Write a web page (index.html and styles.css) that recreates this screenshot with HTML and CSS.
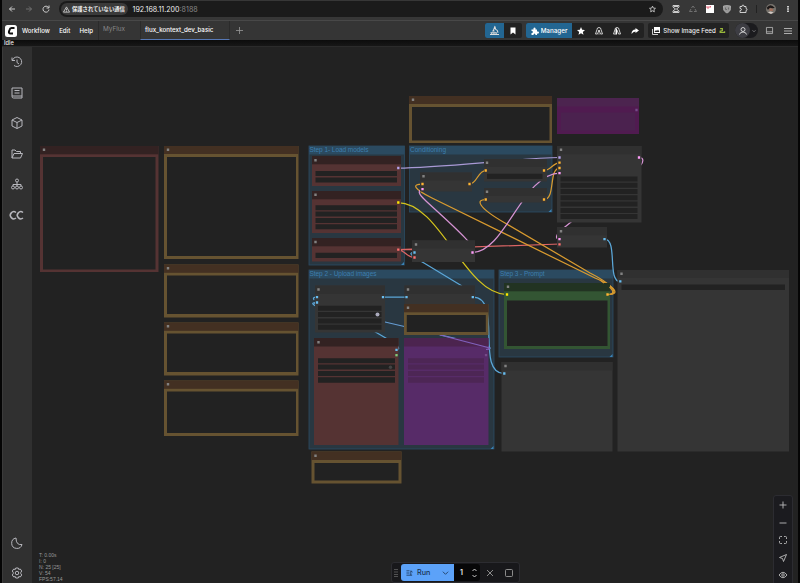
FILE: index.html
```
<!DOCTYPE html>
<html lang="ja">

<head>
    <meta charset="UTF-8">
    <meta name="viewport" content="width=device-width, initial-scale=1.0">
    <title>flux_kontext_dev_basic - ComfyUI</title>
    <link rel="stylesheet" href="styles.css">
</head>

<body>
    <!-- Browser toolbar -->
    <header class="browser-bar">
        <div class="nav-icons">
            <svg class="icon" viewBox="0 0 16 16"><path d="M14 8H3M8 3L3 8l5 5"/></svg>
            <svg class="icon dim" viewBox="0 0 16 16"><path d="M2 8h11M8 3l5 5-5 5"/></svg>
            <svg class="icon" viewBox="0 0 16 16"><path d="M13 5A6 6 0 1 0 14 9M14 1v5H9"/></svg>
        </div>
        <div class="url-bar">
            <div class="security-chip">
                <svg class="icon" viewBox="0 0 16 16"><path d="M8 2L15 14H1zM8 6v4M8 11v2"/></svg>
                <span>保護されていない通信</span>
            </div>
            <span class="url">192.168.11.200<span class="port">:8188</span></span>
            <svg class="icon bookmark" viewBox="0 0 16 16"><path d="M8 1.500l2 4.400 4.800.5-3.600 3.200 1 4.800L8 12l-4.200 2.400 1-4.800L1.200 6.400l4.800-.5z"/></svg>
        </div>
        <div class="extensions">
            <svg class="icon" viewBox="0 0 16 16"><path d="M2 1h12v3L9 8l5 4v3H2v-3l5-4-5-4zM4 3h8M4 13h8"/></svg>
            <svg class="icon dim" viewBox="0 0 16 16"><path d="M5 6l3-4 3 4M12 8l3 5h-5M7 13H1l3-5"/></svg>
            <svg class="icon" viewBox="0 0 16 16"><path class="pink-page" d="M0 0h16v16H0z"/><path class="pink-mark" d="M2 2v4h4V2M9 2v3"/></svg>
            <svg class="icon" viewBox="0 0 16 16"><path class="shield" d="M1 2l7-1 7 1v5c0 4-3 7-7 9-4-2-7-5-7-9z"/><path class="shield-mark" d="M5 5v4h3M11 5v4"/></svg>
            <svg class="icon" viewBox="0 0 16 16"><path d="M2 3h4q0-3 2-3t2 3h4v4q2 0 2 2t-2 2v4H2v-4q3 0 3-2T2 7z"/></svg>
            <i class="divider"></i>
            <svg class="icon avatar" viewBox="0 0 16 16"><circle cx="8" cy="8" r="8"/><path class="hair" d="M1 6q6-8 13 0l-4 1-3-1-4 3z"/><path class="face" d="M5 7h6v4H6z"/><path class="shirt" d="M3 13l4-1 5 1-4 3z"/></svg>
            <svg class="icon" viewBox="0 0 16 16"><path class="fill" d="M6 0h4v4H6zM6 6h4v4H6zM6 12h4v4H6z"/></svg>
        </div>
    </header>

    <!-- ComfyUI top menu -->
    <nav class="menu-bar">
        <svg class="logo" viewBox="0 0 24 24"><rect width="24" height="24" rx="5"/><path d="M19 6h-6q-3 0-4 4l-1 3q-1 4 3 4h5"/></svg>
        <div class="menu">
            <span>Workflow</span>
            <span>Edit</span>
            <span>Help</span>
        </div>
        <div class="tab">MyFlux</div>
        <div class="tab active">flux_kontext_dev_basic</div>
        <svg class="icon add-tab" viewBox="0 0 16 16"><path d="M8 0v16M0 8h16"/></svg>
        <div class="actions">
            <div class="btn-group">
                <span class="btn blue square"><svg class="icon" viewBox="0 0 16 16"><path d="M0 15h16M1 12h11M4 9h4M9 0L6 8M9 2l1 4q4 1 4 6M3 12v3M7 12v3M11 12v3"/></svg></span>
                <span class="btn"><svg class="icon" viewBox="0 0 16 16"><path class="fill" d="M3 1h10v14l-5-4-5 4z"/></svg></span>
            </div>
            <div class="btn-group manager">
                <span class="btn blue wide"><svg class="icon" viewBox="0 0 16 16"><path class="fill" d="M1 5h4q-1-4 2-4t2 4h3v4q4-1 4 2t-4 2v3H9q0-3-2-3t-2 3H1v-4q3 0 3-2T1 8z"/></svg>Manager</span>
                <span class="btn"><svg class="icon" viewBox="0 0 16 16"><path class="fill" d="M8 0l2.300 5.400 5.700.5-4.300 3.900 1.300 5.700L8 12.400l-5 3.100 1.300-5.700L0 5.900l5.700-.5z"/></svg></span>
                <span class="btn"><svg class="icon" viewBox="0 0 16 16"><path d="M4 5q0-4 4-4t4 4l3 9h-4L8 6l-3 8H1zM8 6v4M7 14h2"/></svg></span>
                <span class="btn"><svg class="icon" viewBox="0 0 16 16"><path d="M4 5q0-4 4-4t4 4l3 9h-4L8 6M4 5L1 14h4"/><path class="fill" d="M5 3h3v12H5z"/></svg></span>
                <span class="btn"><svg class="icon" viewBox="0 0 16 16"><path class="fill" d="M9 2l7 5-7 5V9q-5 0-8 5 0-9 8-9z"/></svg></span>
            </div>
            <div class="btn-group feed">
                <svg class="icon" viewBox="0 0 16 16"><path class="fill" d="M4 0h12v12H4z"/><path d="M1 4v11h11"/><path class="cut" d="M5 10l3-4 2 2 2-3 3 5z"/></svg>
                <span>Show Image Feed</span>
                <svg class="icon snake" viewBox="0 0 16 16"><path d="M3 3h6v5l-6 2v3h12v-3"/></svg>
            </div>
            <div class="user">
                <span class="user-face"><svg class="icon" viewBox="0 0 16 16"><circle cx="8" cy="5" r="4"/><path d="M1 15q1-5 7-5t7 5"/></svg></span>
                <svg class="icon caret" viewBox="0 0 16 16"><path d="M2 5l6 6 6-6"/></svg>
            </div>
            <svg class="icon panel" viewBox="0 0 16 16"><path d="M1 1h14v14H1zM1 11h14"/></svg>
            <svg class="icon burger" viewBox="0 0 16 16"><path d="M0 3h16M0 8h16M0 13h16"/></svg>
        </div>
    </nav>

    <div class="status">Idle</div>

    <main class="workspace">
        <aside class="sidebar">
            <svg class="icon" viewBox="0 0 24 24"><path d="M2 3v6h6M3 8a9.500 9.500 0 1 1 3 11M12 7v6l4 3"/></svg>
            <svg class="icon" viewBox="0 0 24 24"><path d="M2 2h20v20H5q-3 0-3-3zM2 18h20M7 7h10M7 12h10"/></svg>
            <svg class="icon" viewBox="0 0 24 24"><path d="M12 1l10 5v12l-10 5-10-5V6zM2 6l10 5 10-5M12 11v12"/></svg>
            <svg class="icon" viewBox="0 0 24 24"><path d="M2 20V4h6l3 3h8v4M2 20l4-9h17l-4 9z"/></svg>
            <svg class="icon" viewBox="0 0 24 24"><circle cx="12" cy="5" r="3"/><circle cx="4" cy="19" r="3"/><circle cx="12" cy="19" r="3"/><circle cx="20" cy="19" r="3"/><path d="M12 8v8M4 16v-3h16v3"/></svg>
            <svg class="icon cc" viewBox="0 0 28 24"><path d="M12 7A7 7 0 1 0 12 18M26 7A7 7 0 1 0 26 18"/></svg>
            <svg class="icon moon" viewBox="0 0 24 24"><path d="M10 2A10.500 10.500 0 1 0 22 15Q10 17 10 2z"/></svg>
            <svg class="icon" viewBox="0 0 24 24"><path d="M9.500 2h5l1 3 3-1 3 4-2 3v2l2 3-3 4-3-1-1 3h-5l-1-3-3 1-3-4 2-3v-2L2.500 8l3-4 3 1z"/><circle cx="12" cy="12" r="3.500"/></svg>
        </aside>

        <div class="graph">
            <svg class="graph-canvas" viewBox="32 47 766 536" width="766" height="536">
                <!-- Groups -->
                <g class="group">
                    <rect x="309" y="146" width="95.500" height="119"/>
                    <rect class="group-head" x="309" y="146" width="95.500" height="8.500"/>
                    <rect x="409.500" y="146" width="142.500" height="66"/>
                    <rect class="group-head" x="409.500" y="146" width="142.500" height="8.500"/>
                    <rect x="309" y="270" width="185" height="179"/>
                    <rect class="group-head" x="309" y="270" width="185" height="8.500"/>
                    <rect x="499" y="270" width="114" height="87"/>
                    <rect class="group-head" x="499" y="270" width="114" height="8.500"/>
                    <path class="grip" d="M404 262v3h-3zM551.500 209v3h-3zM493.500 446v3h-3zM612.500 354v3h-3z"/>
                    <text x="309.500" y="152.300" textLength="59">Step 1- Load models</text>
                    <text x="410" y="152.300" textLength="36">Conditioning</text>
                    <text x="309.500" y="276.300" textLength="67">Step 2 - Upload images</text>
                    <text x="500" y="276.300" textLength="44.500">Step 3 - Prompt</text>
                </g>

                <!-- Links -->
                <g class="links">
                    <path class="model" d="M398 168C440 168 520 158 560 157.500"/>
                    <path class="clip" d="M398 202.500C440 202.500 465 294.500 507 294.500"/>
                    <path class="vae" d="M398 249.500L560 244M398 249.500C404 249.500 407 257.500 414 257.500M398 249.500H414"/>
                    <path class="cond" d="M469.500 184C477 184 478 170.500 485.500 170.500M544 170.500C551 170.500 553 162.500 560 162.500M544 199.500C556 199.500 548 168 560 168"/>
                    <path class="cond" d="M607.500 294.500C624 294.500 610 284 595 278L432 198C414 189 411 184 422.500 184"/>
                    <path class="cond" d="M607.500 294.500C622 294.500 610 283 590 273L505 223C477 207 476 199.500 485.500 199.500"/>
                    <path class="latent" d="M472.500 252.500C505 252.500 523 173 560 173M472.500 252.500C485 252.500 435 210 425 200Q415 191 422.500 189"/>
                    <path class="latent" d="M639 157.500C644 157.500 644 162 640 166L560 231Q553 239 560 239"/>
                    <path class="image" d="M604.500 239C618 239 607 281.500 620 281.500M383 297H406.500M473 297C503 297 475 373.500 504 373.500"/>
                    <path class="image" d="M414 252.500C406 252.500 415 258 424 263L462 286"/>
                    <path class="image" d="M317 302.500Q309 302.500 316 306L372 330 396 344Q401 349.500 396.500 349.500M317 297Q312 297 314 300"/>
                    <path class="image" d="M314 303C330 309 355 316 385 322L488 346Q493 349 486 349.500"/>
                </g>

                <!-- Notes -->
                <g class="note red">
                    <rect class="body" x="40" y="146" width="118.500" height="126"/><rect class="head" x="40" y="146" width="118.500" height="8.300"/><rect class="field" x="43" y="157" width="112.500" height="112.500"/>
                </g>
                <g class="note">
                    <rect class="body" x="164" y="146" width="134.500" height="113"/><rect class="head" x="164" y="146" width="134.500" height="8"/><rect class="field" x="167" y="157" width="129" height="99"/>
                    <rect class="body" x="164" y="264.500" width="134.500" height="53"/><rect class="head" x="164" y="264.500" width="134.500" height="8.300"/><rect class="field" x="167" y="275.500" width="129" height="38.500"/>
                    <rect class="body" x="164" y="322.500" width="134.500" height="53"/><rect class="head" x="164" y="322.500" width="134.500" height="8.300"/><rect class="field" x="167" y="333.500" width="129" height="38.500"/>
                    <rect class="body" x="164" y="380.500" width="134.500" height="55.500"/><rect class="head" x="164" y="380.500" width="134.500" height="8.300"/><rect class="field" x="167" y="391.500" width="129" height="41.500"/>
                    <rect class="body" x="409" y="96" width="143" height="47"/><rect class="head" x="409" y="96" width="143" height="8"/><rect class="field" x="412" y="107" width="137.500" height="33.500"/>
                    <rect class="body" x="311.500" y="451.500" width="90" height="32"/><rect class="head" x="311.500" y="451.500" width="90" height="8.500"/><rect class="field" x="314.500" y="463" width="84" height="17.500"/>
                </g>

                <!-- Loaders -->
                <g class="node red">
                    <rect class="body" x="312" y="156" width="89" height="30"/><rect class="head" x="312" y="156" width="89" height="8.300"/>
                    <rect class="body" x="312" y="191" width="89" height="42"/><rect class="head" x="312" y="191" width="89" height="8.300"/>
                    <rect class="body" x="312" y="238" width="89" height="23.500"/><rect class="head" x="312" y="238" width="89" height="8.300"/>
                    <path class="field" d="M315.500 171h81.500v5h-81.500zm0 6.500h81.500v5h-81.500zM315.500 205.300h81.500v5h-81.500zm0 6.300h81.500v5h-81.500zm0 6.300h81.500v5h-81.500zm0 6.300h81.500v5h-81.500zM315.500 252.800h81.500v5.200h-81.500z"/>
                    <rect class="body" x="314" y="338" width="84.500" height="107"/><rect class="head" x="314" y="338" width="84.500" height="8.500"/>
                    <path class="field" d="M318 358.300h77v5h-77zm0 6.300h77v5h-77zm0 6.300h77v5h-77zm0 6.300h77v5.500h-77z"/>
                    <circle class="knob off" cx="390.500" cy="367.300" r="1.700"/>
                </g>

                <!-- Default nodes -->
                <g class="node">
                    <rect class="body" x="420" y="172.500" width="52" height="19"/><rect class="head" x="420" y="172.500" width="52" height="8"/>
                    <rect class="body" x="484" y="159" width="63" height="22.500"/><rect class="head" x="484" y="159" width="63" height="8"/>
                    <rect class="field" x="487" y="173.700" width="55.500" height="5.200"/>
                    <rect class="body" x="484" y="188" width="63" height="14.500"/><rect class="head" x="484" y="188" width="63" height="8"/>
                    <rect class="body" x="557" y="146" width="84.500" height="76.500"/><rect class="head" x="557" y="146" width="84.500" height="8.300"/>
                    <path class="field" d="M560.500 176.500h77v5h-77zm0 6.300h77v5h-77zm0 6.300h77v5h-77zm0 6.200h77v5h-77zm0 6.300h77v5h-77zm0 6.300h77v5h-77zm0 6.200h77v5h-77z"/>
                    <rect class="body" x="557" y="227" width="50" height="20.500"/><rect class="head" x="557" y="227" width="50" height="8.300"/>
                    <rect class="body" x="412" y="240.500" width="63" height="21.500"/><rect class="head" x="412" y="240.500" width="63" height="8"/>
                    <rect class="body" x="315" y="285.500" width="70" height="47"/><rect class="head" x="315" y="285.500" width="70" height="8.300"/>
                    <path class="field" d="M318 305.800h63.500v5h-63.500zm0 6.300h63.500v5h-63.500zm0 6.300h63.500v5h-63.500zm0 6.300h63.500v5h-63.500z"/>
                    <circle class="knob" cx="377.500" cy="314.500" r="2"/>
                    <rect class="body" x="404.500" y="285.500" width="70.500" height="18.500"/><rect class="head" x="404.500" y="285.500" width="70.500" height="8.300"/>
                    <rect class="body" x="501.500" y="362" width="111" height="89.500"/><rect class="head" x="501.500" y="362" width="111" height="8.500"/>
                    <rect class="body" x="617.500" y="270" width="171.500" height="181.500"/><rect class="head" x="617.500" y="270" width="171.500" height="8"/>
                    <rect class="field" x="621.500" y="284.500" width="163.500" height="5.500"/>
                </g>

                <!-- Bypassed nodes -->
                <g class="node bypassed">
                    <rect class="body dark" x="557" y="98" width="82" height="36"/><rect class="head" x="557" y="98" width="82" height="8.500"/><rect class="field" x="561" y="112.500" width="74" height="18"/>
                    <rect class="body" x="404" y="338" width="84.500" height="107"/><rect class="head" x="404" y="338" width="84.500" height="8.500"/>
                    <path class="field" d="M408 358.300h76v5h-76zm0 6.300h76v5h-76zm0 6.300h76v5h-76zm0 6.300h76v5.500h-76z"/>
                </g>
                <path class="ghost-link" d="M440 335L488 347.500Q492 349 486 349.500"/>

                <g class="note">
                    <rect class="body" x="404" y="304" width="84.500" height="31"/><rect class="head" x="404" y="304" width="84.500" height="8.300"/><rect class="field" x="406.800" y="315" width="79" height="17"/>
                </g>
                <g class="node green">
                    <rect class="body" x="504" y="283" width="106" height="66"/><rect class="head" x="504" y="283" width="106" height="8.300"/><rect class="field" x="507" y="300.500" width="100.500" height="45.500"/>
                </g>
                <path class="link-over" d="M600 280l4 3M609.500 287Q617 294 607.500 294.500"/>

                <!-- Collapse boxes -->
                <path class="boxes" d="M44 149.800h.01M168 149.800h.01M168 268.300h.01M168 326.300h.01M168 384.300h.01M413 99.700h.01M315.500 455.700h.01M315.500 160.300h.01M315.500 194.700h.01M315.500 242h.01M423.500 176.300h.01M487 162.700h.01M487 191.700h.01M561 149.800h.01M561 231.300h.01M416 244.500h.01M318.500 289.500h.01M408 289.500h.01M408 307.800h.01M318.500 342.200h.01M508 286.700h.01M505.500 366h.01M621.500 273.700h.01"/>

                <!-- Slots -->
                <path class="slot model" d="M398.300 168h.01M559.500 157.500h.01"/>
                <path class="slot clip" d="M398.300 202.500h.01M507 294.500h.01"/>
                <path class="slot vae" d="M398.300 249.700h.01M414.500 257.500h.01M559.500 244.300h.01"/>
                <path class="slot cond" d="M422.500 184h.01M469.500 184h.01M485.700 170.500h.01M544 170.500h.01M485.700 199.500h.01M544 199.500h.01M559.500 162.600h.01M559.500 168h.01M607.500 294.500h.01"/>
                <path class="slot latent" d="M422.500 189.200h.01M472.500 252.500h.01M559.500 173.200h.01M639 157.500h.01M559.500 239.200h.01"/>
                <path class="slot image" d="M604.500 239.200h.01M620.300 281.300h.01M414.500 252.500h.01M317 297.200h.01M317 302.500h.01M383 297.200h.01M406.500 297.200h.01M472.800 297.200h.01M504.300 373.500h.01M396.500 349.800h.01"/>
                <path class="slot mask" d="M396.500 355.200h.01"/>
                <path class="slot faded" d="M636.500 110h.01M486 355.200h.01"/>
            </svg>

            <div class="stats">
                <div>T: 0.00s</div>
                <div>I: 0</div>
                <div>N: 25 [25]</div>
                <div>V: 54</div>
                <div>FPS:57.14</div>
            </div>

            <div class="run-bar">
                <svg class="icon handle" viewBox="0 0 8 16"><path d="M1 1h2M5 1h2M1 6h2M5 6h2M1 11h2M5 11h2M1 15h2M5 15h2"/></svg>
                <div class="run-btn">
                    <svg class="icon" viewBox="0 0 16 16"><path d="M1 3h7M1 8h7M1 13h13M11 13V3l4 3"/></svg>
                    <span>Run</span>
                    <svg class="icon" viewBox="0 0 16 16"><path d="M2 5l6 6 6-6"/></svg>
                </div>
                <div class="count">
                    <span>1</span>
                    <svg class="icon" viewBox="0 0 10 20"><path d="M1 6l4-4 4 4M1 14l4 4 4-4"/></svg>
                </div>
                <svg class="icon cancel" viewBox="0 0 16 16"><path d="M2 2l12 12M14 2L2 14"/></svg>
                <svg class="icon stop" viewBox="0 0 16 16"><rect x="1" y="1" width="14" height="14" rx="2"/></svg>
            </div>

            <div class="zoom-bar">
                <svg class="icon" viewBox="0 0 16 16"><path d="M8 1v14M1 8h14"/></svg>
                <svg class="icon" viewBox="0 0 16 16"><path d="M1 8h14"/></svg>
                <svg class="icon" viewBox="0 0 16 16"><path d="M1 6V3q0-2 2-2h3M10 1h3q2 0 2 2v3M15 10v3q0 2-2 2h-3M6 15H3q-2 0-2-2v-3"/></svg>
                <svg class="icon" viewBox="0 0 16 16"><path d="M15 1L1 7l6 2 2 6z"/></svg>
                <svg class="icon" viewBox="0 0 16 16"><path d="M0 8q8-11 16 0-8 11-16 0z"/><circle cx="8" cy="8" r="2.500"/></svg>
            </div>
        </div>
    </main>
</body>

</html>
```
FILE: styles.css
```
* {
    margin: 0;
    padding: 0;
    box-sizing: border-box;
}

body {
    width: 800px;
    height: 583px;
    overflow: hidden;
    background-color: #222;
    border-left: 2px solid #050505;
    border-right: 2px solid #050505;
    color: #eee;
    font-family: Inter, 'Noto Sans CJK JP', sans-serif;
    font-size: 7px;
    display: flex;
    flex-direction: column;
}

.icon {
    width: 8px;
    height: 8px;
    flex: none;
    fill: none;
    stroke: #ddd;
    stroke-width: 1.8;
    overflow: visible;
}

.icon .fill {
    fill: #fff;
    stroke: none;
}

.dim {
    stroke: #777;
}

/* browser bar */
.browser-bar {
    height: 21px;
    flex: none;
    display: flex;
    align-items: center;
    background-color: #373737;
    padding-bottom: 2px;
    border-bottom: 1px solid #484848;
}

.nav-icons {
    display: flex;
    gap: 9px;
    padding-left: 6px;
    width: 57px;
}

.url-bar {
    width: 604px;
    height: 16px;
    border-radius: 8px;
    background-color: #1b1b1b;
    display: flex;
    align-items: center;
    padding: 0 7px 0 2px;
}

.security-chip {
    width: 67px;
    height: 12px;
    border-radius: 6px;
    background-color: #3a3a3a;
    display: flex;
    align-items: center;
    gap: 2px;
    padding-left: 2px;
    font-size: 5.3px;
    font-weight: 700;
    white-space: nowrap;
}

.security-chip .icon {
    width: 7px;
    height: 7px;
}

.url {
    margin-left: 4.500px;
    font-size: 7.1px;
}

.port {
    color: #888;
}

.bookmark {
    width: 7px;
    margin-left: auto;
}

.extensions {
    flex: 1;
    display: flex;
    align-items: center;
    justify-content: space-between;
    padding: 0 7px 0 9px;
}

.extensions .icon:last-child {
    width: 6px;
}

.divider {
    width: 1px;
    height: 8px;
    background-color: #222;
}

.pink-page {
    fill: #fff;
    stroke: none;
}

.pink-mark {
    stroke: #e0566c;
}

.shield {
    fill: #999;
    stroke: #aaa;
}

.shield-mark {
    stroke: #666;
}

.extensions .avatar {
    width: 10px;
    height: 10px;
    fill: #77736d;
    stroke: none;
}

.hair {
    fill: #1e1918;
}

.face {
    fill: #a36f5b;
}

.shirt {
    fill: #d3cac5;
}

/* menu bar */
.menu-bar {
    height: 19px;
    flex: none;
    display: flex;
    align-items: center;
    background-color: #353535;
    padding-right: 6px;
}

.logo {
    width: 12px;
    height: 12px;
    margin-left: 3px;
    fill: #fff;
}

.logo path {
    fill: none;
    stroke: #111;
    stroke-width: 4;
}

.menu {
    display: flex;
    justify-content: space-between;
    width: 71px;
    margin: 0 5px 0 5px;
    font-size: 6.1px;
    font-weight: 500;
    color: #fff;
}

.tab {
    width: 42px;
    height: 19px;
    padding-left: 4px;
    line-height: 17px;
    color: #888;
    font-size: 6.4px;
    border-left: 1px solid #2b2b2b;
}

.tab.active {
    width: 90px;
    color: #fff;
    font-size: 6.2px;
    font-weight: 500;
    border-bottom: 1px solid #5778b5;
    border-right: 1px solid #2b2b2b;
}

.add-tab {
    width: 7px;
    height: 7px;
    margin-left: 6px;
    stroke: #999;
}

.actions {
    margin-left: auto;
    display: flex;
    align-items: center;
}

.btn-group {
    display: flex;
    height: 15px;
    border-radius: 2px;
    background-color: #222;
    overflow: hidden;
    margin-right: 4px;
}

.btn {
    width: 18px;
    display: flex;
    align-items: center;
    justify-content: center;
}

.btn.blue {
    background-color: #236692;
    color: #fff;
}

.btn.square {
    width: 19px;
}

.btn.square .icon {
    width: 9px;
    height: 9px;
}

.btn .icon {
    width: 8px;
    height: 8px;
}

.btn.wide {
    width: 46px;
    gap: 2px;
    font-size: 6.3px;
    font-weight: 500;
}

.feed {
    width: 81px;
    align-items: center;
    justify-content: center;
    gap: 3px;
    font-size: 6.2px;
    font-weight: 500;
    margin-right: 6px;
    white-space: nowrap;
}

.feed .icon {
    height: 8px;
    width: 8px;
}

.cut {
    fill: #222;
    stroke: none;
}

.feed .snake {
    width: 6px;
    height: 7px;
    stroke: #99b83b;
    stroke-width: 3;
}

.user {
    width: 23px;
    height: 15px;
    border-radius: 8px;
    background-color: #1b1b1e;
    display: flex;
    align-items: center;
    gap: 2px;
}

.user-face {
    width: 15px;
    height: 15px;
    border-radius: 50%;
    background-color: #3d3d43;
    display: flex;
    align-items: center;
    justify-content: center;
}

.user .caret {
    width: 4px;
    height: 4px;
}

.panel {
    width: 7px;
    height: 7px;
    margin: 0 11px 0 8px;
    stroke: #bbb;
}

.burger {
    stroke: #bbb;
}

.status {
    height: 7px;
    flex: none;
    padding-left: 2px;
    background: linear-gradient(#0c0c0c, #171717);
    border-bottom: 1px solid #2b2b2b;
    font-size: 5.6px;
    line-height: 6px;
    font-weight: 500;
}

/* workspace */
.workspace {
    flex: 1;
    min-height: 0;
    display: flex;
}

.sidebar {
    width: 30px;
    flex: none;
    background-color: #303030;
    border-left: 1px solid #3b3b3b;
    display: flex;
    flex-direction: column;
    align-items: center;
    gap: 18.500px;
    padding: 9px 2px 4px 0;
}

.sidebar .icon {
    width: 12px;
    height: 12px;
    stroke: #b7b7bd;
    stroke-width: 2;
}

.sidebar .cc {
    width: 14px;
    stroke-width: 3;
}

.sidebar .moon {
    margin-top: auto;
}

.graph {
    position: relative;
    width: 766px;
    height: 536px;
}

.graph-canvas {
    display: block;
}

.group rect {
    fill: #293741;
    stroke: #2b4c64;
    stroke-width: .8;
}

.group .group-head {
    fill: #2b4a60;
    stroke: none;
}

.group text {
    fill: #3d7faf;
    font-family: 'Liberation Sans', Arial, sans-serif;
    font-size: 6.5px;
}

.grip {
    fill: #3a82b6;
}

.links path,
.ghost-link,
.link-over {
    fill: none;
    stroke-width: 1.25;
}

.links .model {
    stroke: #a899d5;
}

.links .clip {
    stroke: #d5c51c;
}

.links .vae {
    stroke: #dc6565;
}

.links .cond,
.link-over {
    stroke: #d99b2f;
}

.links .latent {
    stroke: #d693d3;
}

.links .image {
    stroke: #5ba7d8;
}

.links .image:last-child {
    stroke: #659cd2;
}

.ghost-link {
    stroke: #8060bd;
}

.body {
    fill: #353535;
}

.head {
    fill: #303030;
}

.field {
    fill: #222;
}

.note .body {
    fill: #665331;
}

.note .head {
    fill: #433022;
}

.red .body {
    fill: #553333;
}

.red .head {
    fill: #332222;
}

.green .body {
    fill: #335533;
}

.green .head {
    fill: #223322;
}

.bypassed .body {
    fill: #572b68;
}

.bypassed .body.dark {
    fill: #501b50;
}

.bypassed .head {
    fill: #4c244f;
}

.bypassed .field {
    fill: #49264f;
    opacity: .75;
}

.knob {
    fill: #aaaabc;
}

.knob.off {
    fill: #444;
}

.boxes {
    stroke: #828282;
    stroke-width: 2.4;
    stroke-linecap: square;
}

.slot {
    stroke-width: 2.3;
    stroke-linecap: square;
}

.slot.model { stroke: #b8a4ee; }
.slot.clip { stroke: #ffe900; }
.slot.vae { stroke: #ff7070; }
.slot.cond { stroke: #ffb432; }
.slot.latent { stroke: #ff9cf9; }
.slot.image { stroke: #68bdf0; }
.slot.mask { stroke: #81cf7d; }
.slot.faded { stroke: #754b89; }

.stats {
    position: absolute;
    left: 7px;
    bottom: 1px;
    color: #999;
    font-family: 'Liberation Sans', Arial, sans-serif;
    font-size: 5px;
    line-height: 6.1px;
}

.run-bar {
    position: absolute;
    left: 359px;
    bottom: 0;
    width: 129px;
    height: 21px;
    padding-left: 2px;
    display: flex;
    align-items: center;
    background-color: #18181b;
    border: 1px solid #2c2c31;
    border-radius: 3px;
}

.run-bar > .icon {
    stroke: #999;
}

.run-bar .handle {
    width: 4px;
    margin-right: 3px;
}

.cancel {
    margin-left: 6px;
}

.stop {
    margin-left: 11px;
}

.run-btn {
    width: 53px;
    height: 17px;
    display: flex;
    align-items: center;
    padding: 0 5px;
    border-radius: 3px 0 0 3px;
    background-color: #5ca2f9;
    color: #18304f;
    font-size: 7.2px;
    font-weight: 500;
}

.run-btn span {
    margin: 0 auto 0 4px;
}

.run-btn .icon {
    width: 7px;
    stroke: #18304f;
}

.count {
    width: 26px;
    height: 17px;
    display: flex;
    align-items: center;
    justify-content: space-between;
    padding: 0 3px 0 6px;
    background-color: #070708;
    border-radius: 0 3px 3px 0;
    font-weight: 600;
}

.count .icon {
    width: 5px;
    height: 12px;
}

.zoom-bar {
    position: absolute;
    left: 741px;
    top: 448px;
    width: 20px;
    height: 92px;
    padding-top: 5px;
    display: flex;
    flex-direction: column;
    align-items: center;
    gap: 9.500px;
    background-color: #1b1b1f;
    border: 1px solid #2c2c31;
    border-radius: 3px;
}

.zoom-bar .icon {
    stroke: #bbb;
}
```
